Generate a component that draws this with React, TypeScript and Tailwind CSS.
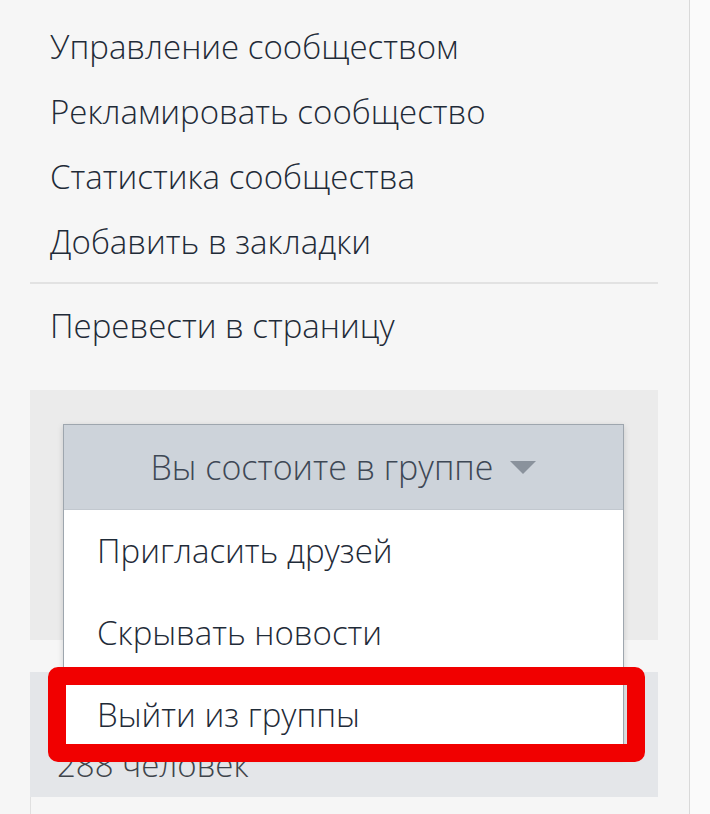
import React from 'react';

const menuTop = ['Управление сообществом', 'Рекламировать сообщество', 'Статистика сообщества', 'Добавить в закладки'];
const dropItems = ['Пригласить друзей', 'Скрывать новости', 'Выйти из группы'];

const App: React.FC = () => {
  return (
    <div
      className="w-[710px] h-[814px] flex bg-[#fafafa] overflow-hidden font-light"
      style={{ fontFamily: '"Open Sans", "Noto Sans", sans-serif' }}
    >
      <div className="w-[690px] shrink-0 bg-[#f6f6f6] border-r border-[#d9d9d9] px-[30px] pt-[14px]">
        {menuTop.map((t) => (
          <div key={t} className="h-[65px] flex items-center pl-[20px] text-[33px] text-[#1f2b38]">
            {t}
          </div>
        ))}
        <div className="mt-[8px] border-t-2 border-[#e2e2e2] w-[628px]" />
        <div className="h-[64px] mt-[10px] flex items-center pl-[20px] text-[33px] text-[#1f2b38]">
          Перевести в страницу
        </div>

        <div className="relative mt-[32px] w-[628px]">
          <div className="h-[250px] bg-[#ebebeb]" />
          <div className="h-[32px]" />
          <div className="h-[125px] bg-[#e4e6e9] flex items-end pb-[8px] pl-[27px] text-[33px] text-[#3e444b]">
            288 человек
          </div>
          <div className="h-[40px] border-l border-[#e0e0e0]" />

          {/* dropdown menu */}
          <div className="absolute left-[33px] top-[34px] w-[561px] border border-[#9ea6ae] shadow-[0_2px_6px_rgba(0,0,0,0.15)] bg-white">
            <div className="h-[85px] bg-[#cdd3da] border-b border-[#c2c8cf] flex items-center justify-center gap-[17px] text-[34px] text-[#3e4855]">
              <span>Вы состоите в группе</span>
              <svg width="26" height="13" viewBox="0 0 26 13">
                <polygon points="0,0 26,0 13,13" fill="#8a929c" />
              </svg>
            </div>
            {dropItems.map((t) => (
              <div key={t} className="h-[82px] flex items-center pl-[33px] text-[33px] text-[#1f2b38]">
                {t}
              </div>
            ))}
          </div>

          {/* red highlight */}
          <div className="absolute left-[18px] top-[277px] w-[597px] h-[95px] border-[18px] border-[#f10000] rounded-[10px]" />
        </div>
      </div>
      <div className="flex-1" />
    </div>
  );
};

export default App;
